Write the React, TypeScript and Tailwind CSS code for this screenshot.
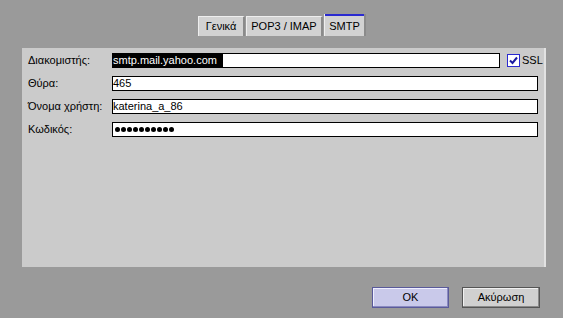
export default function App() {
  const rows = [
    { label: "Θύρα:", value: "465" },
    { label: "Όνομα χρήστη:", value: "katerina_a_86" },
  ];

  return (
    <div
      className="flex h-[318px] w-[563px] flex-col bg-[#9a9a9a] text-[11px] text-black"
      style={{ fontFamily: '"Liberation Sans", Arial, sans-serif' }}
    >
      {/* Tabs */}
      <div className="flex h-[48px] items-end justify-center pb-[12px] pl-[1px]">
        <div className="flex items-end">
          <div className="flex h-[20px] w-[47px] items-center justify-center border-l border-t border-l-[#eeeeee] border-t-[#eeeeee] border-r-2 border-r-[#8a8a8a] bg-[#d2d2d2]">
            Γενικά
          </div>
          <div className="ml-[1px] flex h-[20px] w-[77px] items-center justify-center border-l border-t border-l-[#eeeeee] border-t-[#eeeeee] border-r-2 border-r-[#8a8a8a] bg-[#d2d2d2]">
            POP3 / IMAP
          </div>
          <div className="ml-[1px] flex h-[22px] w-[42px] flex-col border-l border-l-[#eeeeee] border-r-2 border-r-[#8a8a8a] bg-[#d2d2d2]">
            <div className="h-[2px] bg-[#2a2ad0]" />
            <div className="flex flex-1 items-center justify-center">SMTP</div>
          </div>
        </div>
      </div>

      {/* Panel */}
      <div className="ml-[22px] flex h-[219px] w-[524px] flex-col gap-[8px] border-r-2 border-r-[#e2e2e2] bg-[#cbcbcb] pl-[6px] pr-[6px] pt-[5px]">
        <div className="flex h-[15px] items-center">
          <div className="w-[84px] shrink-0">Διακομιστής:</div>
          <div className="flex h-[15px] w-[388px] shrink-0 items-stretch border border-black bg-white">
            <span className="flex items-center bg-black pr-[6px] text-white">smtp.mail.yahoo.com</span>
          </div>
          <div className="ml-[7px] flex h-[13px] w-[13px] shrink-0 items-center justify-center border border-[#2a2ad0] bg-white">
            <svg viewBox="0 0 11 11" className="h-[11px] w-[11px]">
              <path d="M2 5.5 L4.5 8 L9 2.5" fill="none" stroke="#1a1aa0" strokeWidth="2" />
            </svg>
          </div>
          <span className="ml-[2px]">SSL</span>
        </div>
        {rows.map((r) => (
          <div key={r.label} className="flex h-[15px] items-center">
            <div className="w-[84px] shrink-0">{r.label}</div>
            <div className="flex h-[15px] w-[426px] items-center border border-black bg-white">{r.value}</div>
          </div>
        ))}
        <div className="flex h-[15px] items-center">
          <div className="w-[84px] shrink-0">Κωδικός:</div>
          <div className="flex h-[15px] w-[426px] items-center gap-[1px] border border-black bg-white pl-[2px]">
            {Array.from({ length: 10 }).map((_, i) => (
              <span key={i} className="h-[5px] w-[5px] rounded-full bg-black" />
            ))}
          </div>
        </div>
      </div>

      {/* Buttons */}
      <div className="mr-[23px] mt-[20px] flex justify-end gap-[13px]">
        <button className="flex h-[21px] w-[77px] items-center justify-center border border-[#5a5a9a] bg-[#c9c9ea] shadow-[inset_-1px_-1px_0_#8a8ac0,inset_1px_1px_0_#eeeeff]">
          OK
        </button>
        <button className="flex h-[21px] w-[78px] items-center justify-center border border-[#555555] bg-[#d0d0d0] shadow-[inset_-1px_-1px_0_#8a8a8a,inset_1px_1px_0_#f0f0f0]">
          Ακύρωση
        </button>
      </div>
    </div>
  );
}
